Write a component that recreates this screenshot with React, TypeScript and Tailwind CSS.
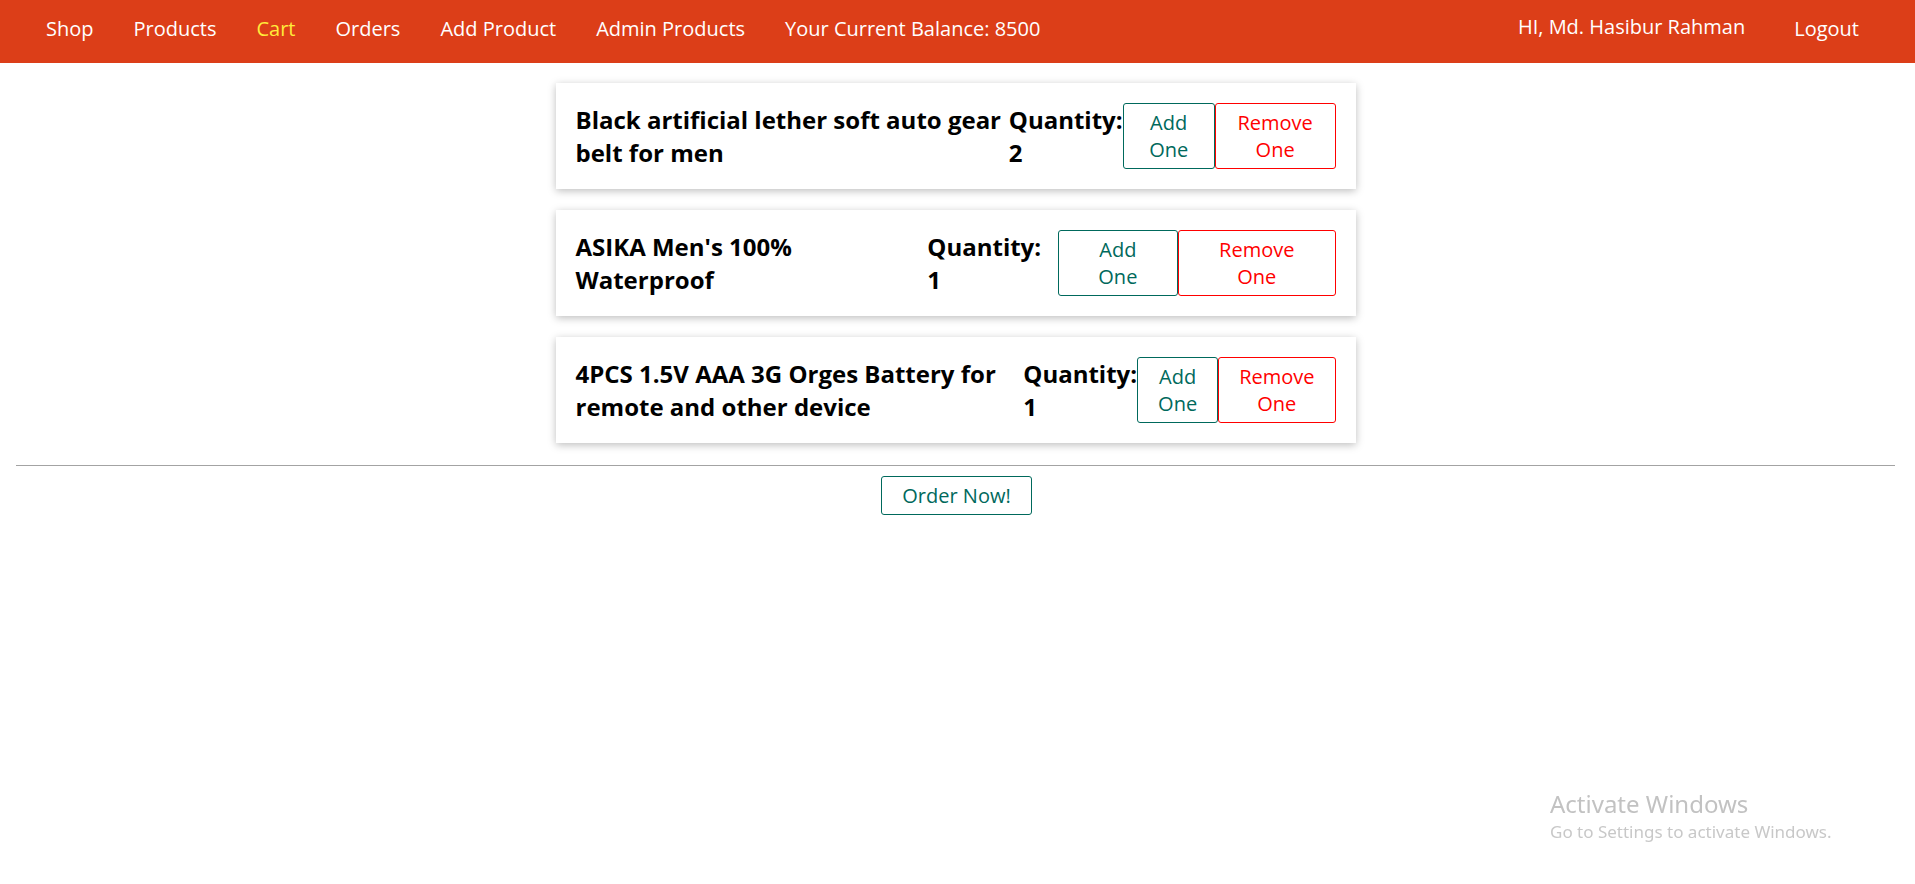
import React from "react";

interface CartItem {
  id: number;
  title: string;
  quantity: number;
}

const items: CartItem[] = [
  { id: 1, title: "Black artificial lether soft auto gear belt for men", quantity: 2 },
  { id: 2, title: "ASIKA Men's 100% Waterproof", quantity: 1 },
  { id: 3, title: "4PCS 1.5V AAA 3G Orges Battery for remote and other device", quantity: 1 },
];

const navLinks = ["Shop", "Products", "Cart", "Orders", "Add Product", "Admin Products"];

export default function App() {
  return (
    <div className="min-h-screen bg-white text-black font-['Open_Sans',sans-serif]">
      {/* header */}
      <header className="h-[63px] bg-[#dc3e18] flex justify-between text-white text-xl">
        <ul className="flex gap-10 pl-[46px] pt-[15px] leading-[normal]">
          {navLinks.map((link) => (
            <li key={link} className={link === "Cart" ? "text-[#ffeb3b]" : ""}>
              {link}
            </li>
          ))}
          <li>Your Current Balance: 8500</li>
        </ul>

        <div className="flex gap-[49px] pr-[56px]">
          <span className="pt-[13px] leading-[normal]">HI, Md. Hasibur Rahman</span>
          <button className="pt-[15px] leading-[normal] self-start">Logout</button>
        </div>
      </header>

      <main className="pt-[20px]">
        <div className="flex flex-col gap-[21px] pr-[4px]">
          {items.map((item) => (
            <div
              key={item.id}
              className="mx-auto w-[800px] p-5 bg-white flex shadow-[0_2px_8px_rgba(0,0,0,0.26)]"
            >
              <h2 className="text-2xl font-bold leading-[normal]">{item.title}</h2>
              <h2 className="text-2xl font-bold leading-[normal]">
                Quantity: {item.quantity}
              </h2>
              <div className="flex">
                <button className="border border-[#00695c] text-[#00695c] rounded-[3px] px-5 py-[5px] text-xl leading-[normal]">
                  Add One
                </button>
              </div>
              <div className="flex">
                <button className="border border-[#ff0000] text-[#ff0000] rounded-[3px] px-5 py-[5px] text-xl leading-[normal]">
                  Remove One
                </button>
              </div>
            </div>
          ))}
        </div>

        <hr className="mt-[22px] ml-4 mr-5 border-[#a3a3a3]" />

        <div className="flex justify-center mt-[10px] pr-[2px]">
          <button className="border border-[#00695c] text-[#00695c] rounded-[3px] px-5 py-[5px] text-xl leading-[normal]">
            Order Now!
          </button>
        </div>
      </main>

      {/* windows watermark */}
      <div className="fixed left-[1550px] top-[788px] text-[#c2c2c2] font-['Noto_Sans',sans-serif] pointer-events-none">
        <p className="text-[24px] leading-[32px]">Activate Windows</p>
        <p className="text-[17px] leading-[24px] text-[#c8c8c8]">
          Go to Settings to activate Windows.
        </p>
      </div>
    </div>
  );
}
